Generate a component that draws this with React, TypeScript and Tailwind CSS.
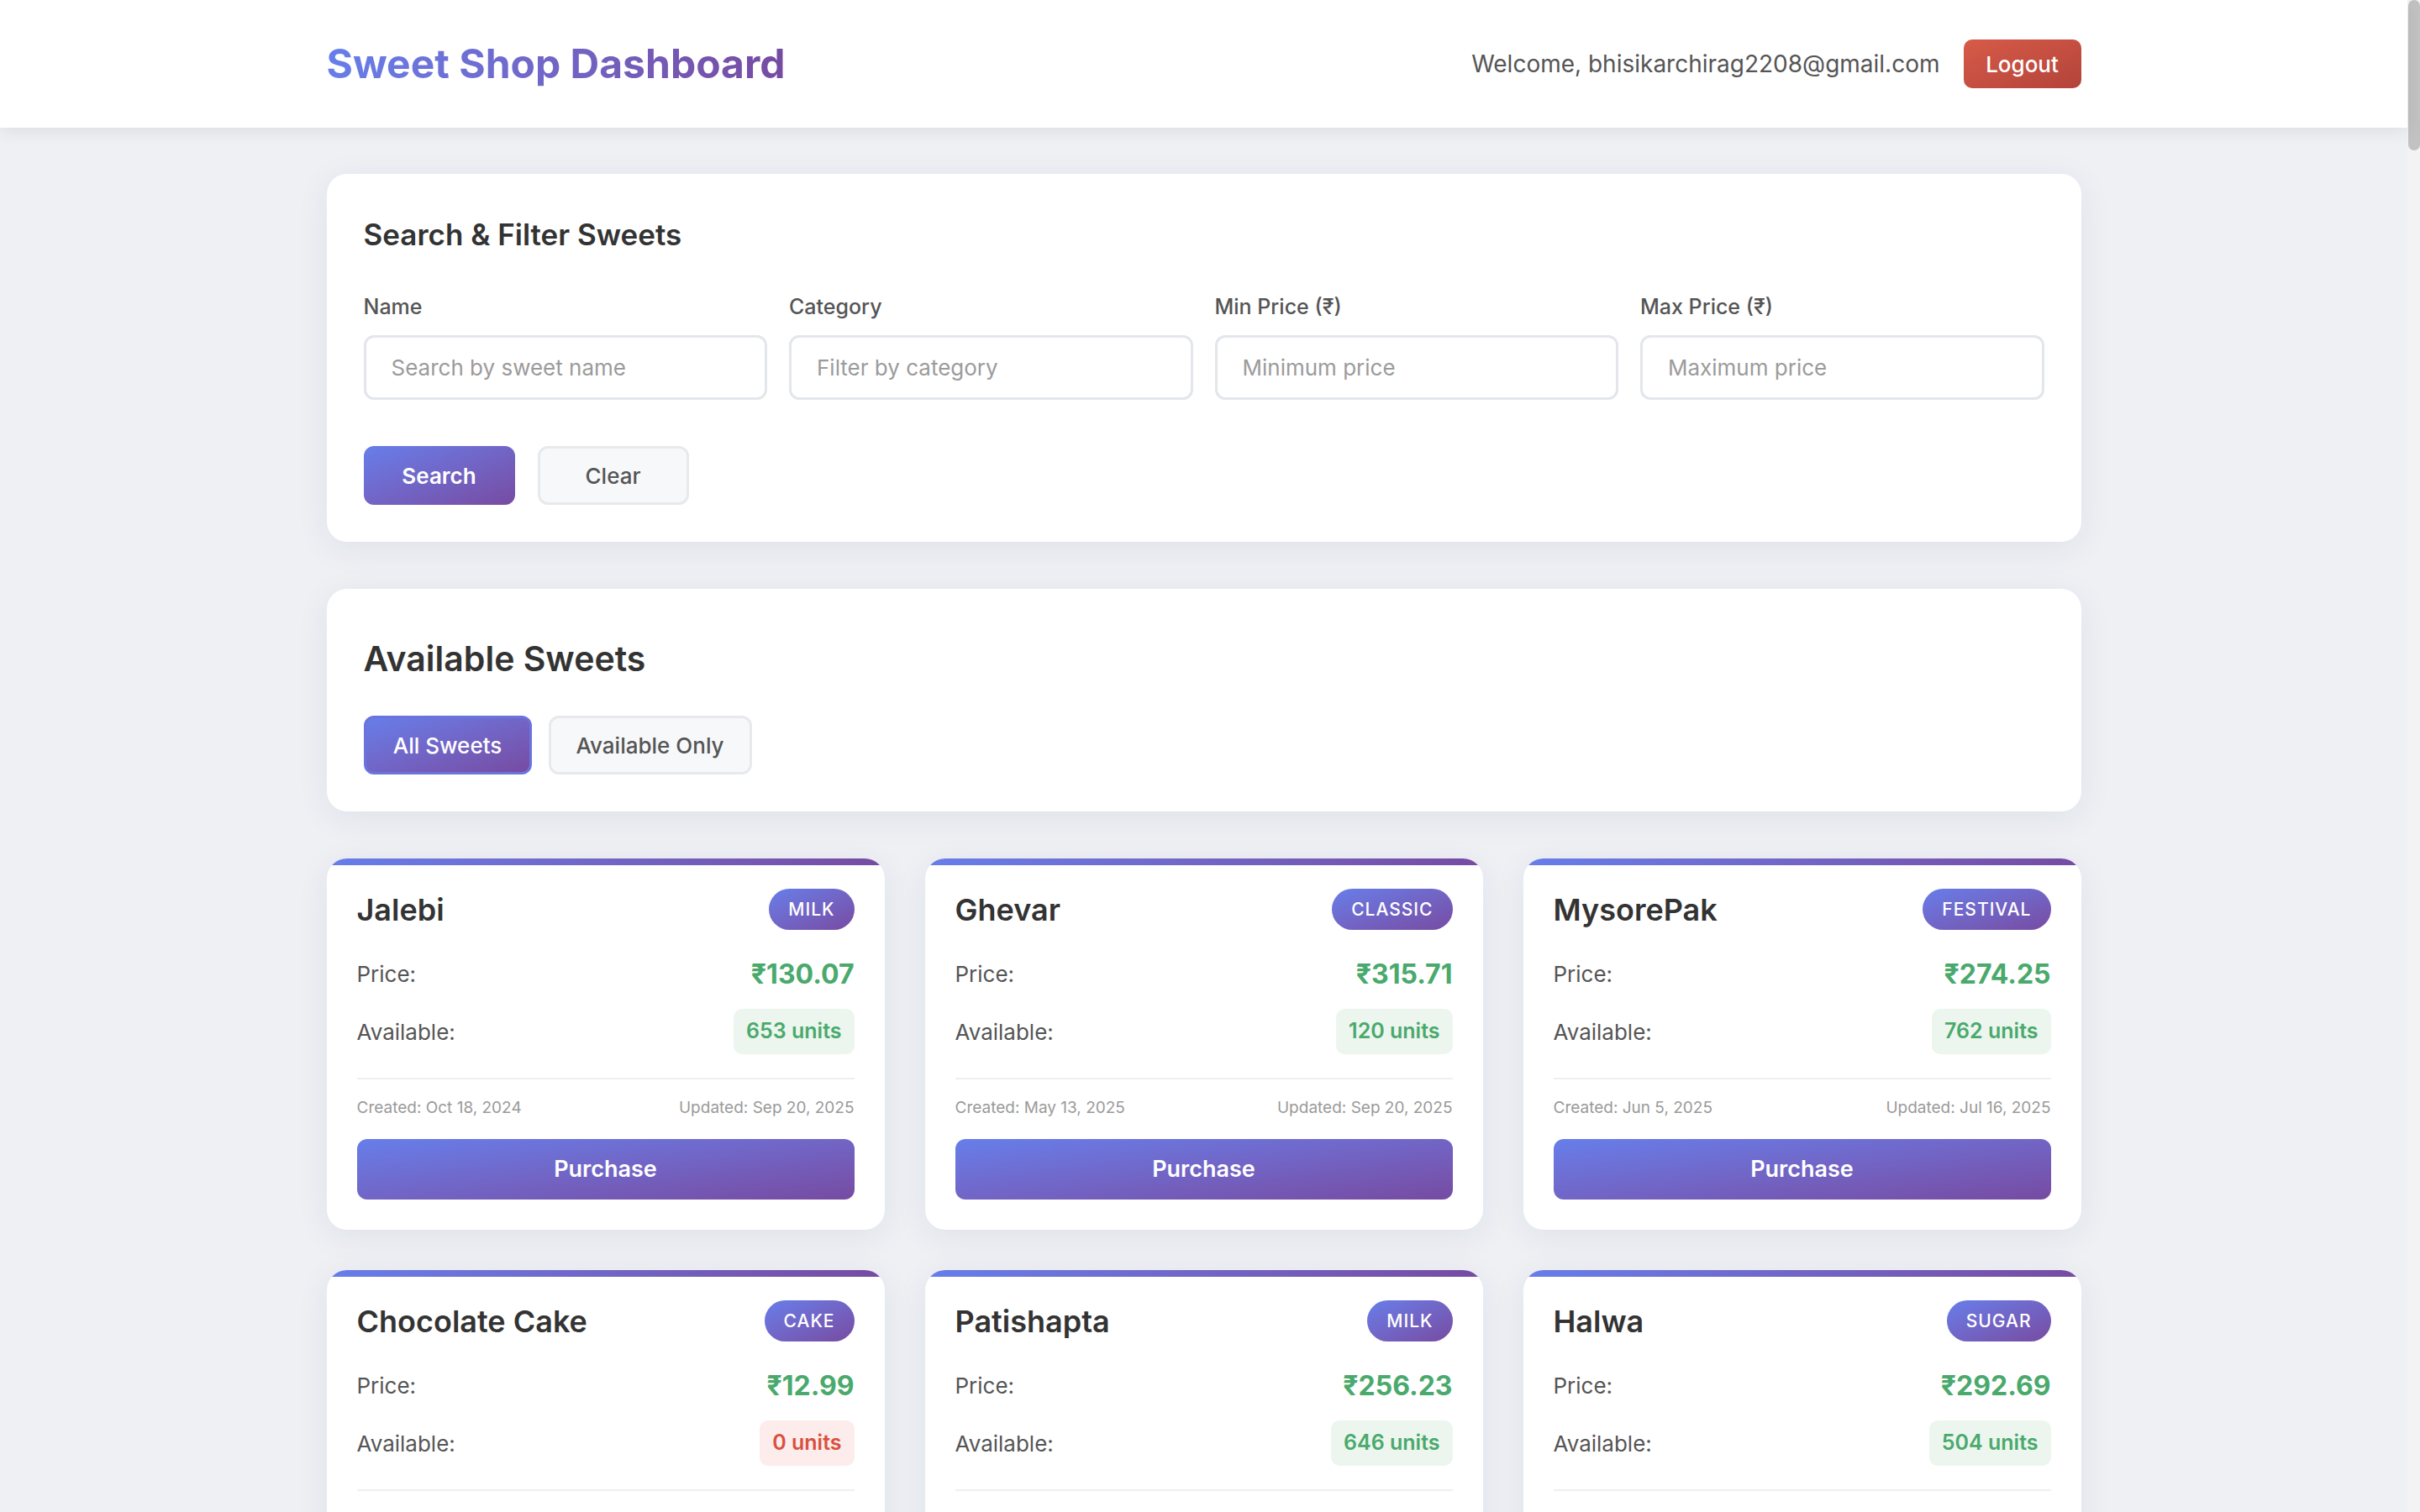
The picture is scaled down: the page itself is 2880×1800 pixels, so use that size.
import React from "react";

interface Sweet {
  id: number;
  name: string;
  category: string;
  price: number;
  quantity: number;
  created: string;
  updated: string;
}

const sweets: Sweet[] = [
  { id: 1, name: "Jalebi", category: "milk", price: 130.07, quantity: 653, created: "Oct 18, 2024", updated: "Sep 20, 2025" },
  { id: 2, name: "Ghevar", category: "classic", price: 315.71, quantity: 120, created: "May 13, 2025", updated: "Sep 20, 2025" },
  { id: 3, name: "MysorePak", category: "festival", price: 274.25, quantity: 762, created: "Jun 5, 2025", updated: "Jul 16, 2025" },
  { id: 4, name: "Chocolate Cake", category: "cake", price: 12.99, quantity: 0, created: "Sep 1, 2025", updated: "Sep 20, 2025" },
  { id: 5, name: "Patishapta", category: "milk", price: 256.23, quantity: 646, created: "Jan 14, 2025", updated: "Sep 20, 2025" },
  { id: 6, name: "Halwa", category: "sugar", price: 292.69, quantity: 504, created: "Feb 2, 2025", updated: "Aug 11, 2025" },
];

const filters = [
  { label: "Name", placeholder: "Search by sweet name" },
  { label: "Category", placeholder: "Filter by category" },
  { label: "Min Price (₹)", placeholder: "Minimum price" },
  { label: "Max Price (₹)", placeholder: "Maximum price" },
];

function SweetCard({ sweet }: { sweet: Sweet }) {
  const inStock = sweet.quantity > 0;
  return (
    <div className="bg-white rounded-[24px] overflow-hidden shadow-[0_8px_40px_rgba(30,40,80,0.07)]">
      <div className="h-[8px] bg-gradient-to-r from-[#667eea] to-[#764ba2]" />
      <div className="px-[36px] pt-[28px] pb-[36px]">
        <div className="flex items-center justify-between h-[49px]">
          <h3 className="text-[36px] font-semibold text-[#333] leading-none">{sweet.name}</h3>
          <span className="h-[49px] flex items-center px-[23px] rounded-full bg-gradient-to-br from-[#667eea] to-[#764ba2] text-white text-[21px] font-medium uppercase tracking-[1px]">
            {sweet.category}
          </span>
        </div>

        <div className="mt-[32px] flex items-center justify-between h-[41px]">
          <span className="text-[26px] text-[#555]">Price:</span>
          <span className="text-[32px] font-bold text-[#4aa96c]">₹{sweet.price.toFixed(2)}</span>
        </div>

        <div className="mt-[21px] flex items-center justify-between">
          <span className="text-[26px] text-[#555]">Available:</span>
          <span
            className={
              inStock
                ? "h-[54px] flex items-center px-[15px] rounded-[10px] bg-[#ecf6ef] text-[#4aa96c] text-[25px] font-semibold"
                : "h-[54px] flex items-center px-[15px] rounded-[10px] bg-[#fcecec] text-[#d9503f] text-[25px] font-semibold"
            }
          >
            {sweet.quantity} units
          </span>
        </div>

        <div className="mt-[28px] h-[2px] bg-[#efefef]" />

        <div className="mt-[19px] flex items-center justify-between text-[19px] leading-[30px] text-[#9a9a9a]">
          <span>Created: {sweet.created}</span>
          <span>Updated: {sweet.updated}</span>
        </div>

        <button className="mt-[22px] w-full h-[72px] rounded-[12px] bg-gradient-to-br from-[#667eea] to-[#764ba2] text-white text-[27px] font-semibold">
          Purchase
        </button>
      </div>
    </div>
  );
}

export default function App() {
  return (
    <div className="flex w-full h-[1800px] overflow-hidden bg-[#eef0f4] font-[Inter,sans-serif]">
      <div className="flex-1 min-w-0 flex flex-col">
        <header className="h-[152px] shrink-0 bg-white shadow-[0_4px_20px_rgba(0,0,0,0.08)] relative z-10">
          <div className="w-[2088px] mx-auto h-full flex items-center justify-between">
            <h1 className="text-[48px] font-bold bg-gradient-to-r from-[#667eea] to-[#764ba2] bg-clip-text text-transparent">
              Sweet Shop Dashboard
            </h1>
            <div className="flex items-center gap-[28px]">
              <span className="text-[28px] text-[#555]">Welcome, bhisikarchirag2208@gmail.com</span>
              <button className="w-[140px] h-[58px] rounded-[10px] bg-gradient-to-br from-[#d75b48] to-[#b3433a] text-white text-[26px] font-medium">
                Logout
              </button>
            </div>
          </div>
        </header>

        <main className="w-[2088px] mx-auto pt-[55px] flex flex-col gap-[56px]">
          {/* search & filter */}
          <section className="bg-white rounded-[24px] p-[44px] shadow-[0_8px_40px_rgba(30,40,80,0.07)]">
            <h3 className="text-[35px] leading-[56px] font-semibold text-[#333]">Search &amp; Filter Sweets</h3>
            <div className="mt-[39px] grid grid-cols-4 gap-[26px]">
              {filters.map(f => (
                <div key={f.label} className="flex flex-col">
                  <label className="text-[25px] leading-[39px] font-medium text-[#555]">{f.label}</label>
                  <input
                    placeholder={f.placeholder}
                    className="mt-[14px] h-[77px] rounded-[12px] border-[3px] border-[#e3e6eb] bg-white px-[30px] text-[26px] text-[#333] placeholder:text-[#9b9b9b] outline-none"
                  />
                </div>
              ))}
            </div>
            <div className="mt-[55px] flex gap-[27px]">
              <button className="w-[180px] h-[70px] rounded-[12px] bg-gradient-to-br from-[#667eea] to-[#764ba2] text-white text-[26px] font-semibold">
                Search
              </button>
              <button className="w-[180px] h-[70px] rounded-[12px] bg-[#f7f8fa] border-[3px] border-[#e8e9ed] text-[#555] text-[26px] font-medium">
                Clear
              </button>
            </div>
          </section>

          {/* available sweets */}
          <section className="bg-white rounded-[24px] p-[44px] shadow-[0_8px_40px_rgba(30,40,80,0.07)]">
            <h2 className="mt-[13px] text-[41px] leading-[52px] font-semibold text-[#333]">Available Sweets</h2>
            <div className="mt-[42px] flex gap-[20px]">
              <button className="w-[200px] h-[70px] rounded-[12px] border-[3px] border-[#6b73dc] bg-gradient-to-br from-[#667eea] to-[#764ba2] text-white text-[26px] font-medium">
                All Sweets
              </button>
              <button className="w-[242px] h-[70px] rounded-[12px] border-[3px] border-[#e8e9ed] bg-[#f7f8fa] text-[#555] text-[26px] font-medium">
                Available Only
              </button>
            </div>
          </section>

          <div className="grid grid-cols-3 gap-[48px]">
            {sweets.map(s => (
              <SweetCard key={s.id} sweet={s} />
            ))}
          </div>
        </main>
      </div>

      {/* scrollbar */}
      <div className="w-[15px] shrink-0 bg-[#f3f3f5] flex justify-end">
        <div className="w-[14px] h-[179px] rounded-full bg-[#c2c2c2]" />
      </div>
    </div>
  );
}
